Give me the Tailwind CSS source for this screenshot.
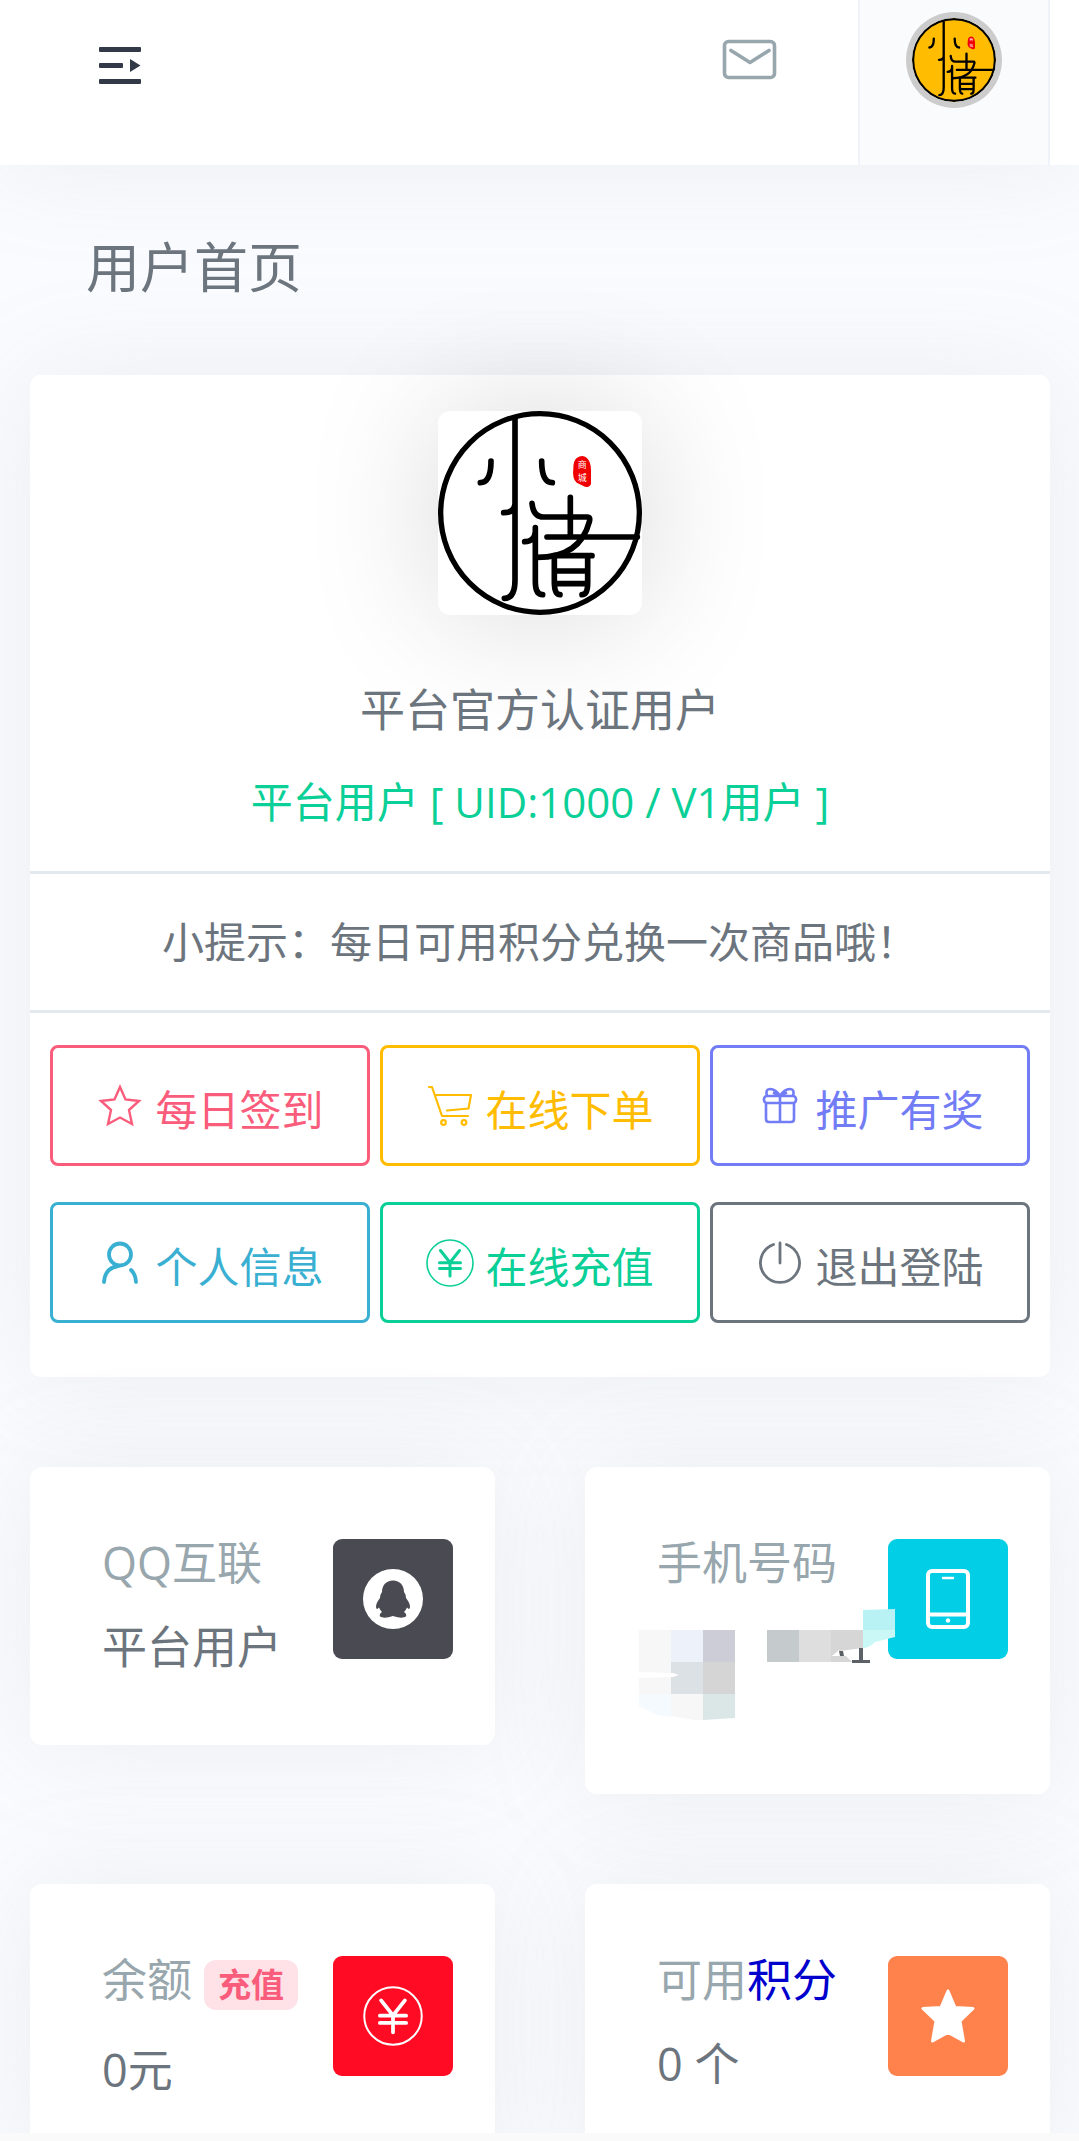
<!DOCTYPE html>
<html lang="zh-CN">
<head>
    <meta charset="UTF-8">
    <meta name="viewport" content="width=device-width, initial-scale=1.0">
    <title>用户首页</title>
    <script src="https://cdn.jsdelivr.net/npm/@tailwindcss/browser@4"></script>
</head>
<body class="bg-[#fafbfe] text-[#6c757d] font-['Open_Sans','Noto_Sans_CJK_SC',sans-serif] overflow-x-hidden">
    <!-- shared logo strokes -->
    <svg class="hidden">
        <symbol id="logo" viewBox="54 63 612 612">
            <circle cx="360" cy="369" r="298" fill="none" stroke="#000" stroke-width="16"/>
            <g fill="none" stroke="#000" stroke-width="17" stroke-linecap="round" stroke-linejoin="round">
                <path d="M285 85V570Q285 625 253 625M285 340Q285 368 251 368"/>
                <path d="M213 213Q213 278 181 278M365 213Q365 278 397 278"/>
                <path d="M336 340Q340 381 370 381H502Q512 381 508 395Q480 502 352 502M451 322V440M381 441H652"/>
                <path d="M346 413V575Q346 614 368 614M346 425Q344 455 314 455"/>
                <path d="M403 497H516M403 505V575Q403 614 420 614M503 497V580Q503 614 486 614M403 543H503M403 581H503"/>
            </g>
            <path d="M470 204Q487 193 500 203Q513 215 513 240V282Q508 294 495 290L470 278Q456 268 460 235Q460 212 470 204Z" fill="#f00000"/>
            <text x="473" y="234" font-size="27" fill="#fff" font-family="Noto Sans CJK SC">商</text>
            <text x="473" y="274" font-size="27" fill="#fff" font-family="Noto Sans CJK SC">城</text>
        </symbol>
        <symbol id="yen" viewBox="0 0 48 48">
            <circle cx="24" cy="24" r="23" fill="none" stroke="currentColor" stroke-width="1.6"/>
            <path d="M14.500 11.500L24 23.500L33.500 11.500M24 24V37M13.500 23.700H34.500M13.500 29.500H34.500" fill="none" stroke="currentColor" stroke-width="3" stroke-linecap="round"/>
        </symbol>
    </svg>

    <header class="relative flex items-start h-[165px] bg-white shadow-[0_0_105px_0_rgba(154,161,171,0.15)]">
        <button type="button" aria-label="菜单" class="ml-[96px] mt-[41px]">
            <svg class="w-12 h-12" viewBox="0 0 48 48" fill="#313a46">
                <rect x="3" y="6" width="42" height="5" rx="1"/>
                <rect x="3" y="22" width="24" height="5" rx="1"/>
                <rect x="3" y="38" width="42" height="5" rx="1"/>
                <path d="M34 18L44.500 24.500L34 31Z"/>
            </svg>
        </button>
        <a href="#" aria-label="消息" class="ml-auto mr-20 mt-8">
            <svg class="w-14 h-14" viewBox="0 0 56 56" fill="none" stroke="#98a6ad" stroke-width="3.600" stroke-linecap="round" stroke-linejoin="round">
                <rect x="2.500" y="9.500" width="50" height="36" rx="4"/>
                <path d="M9 18.500L28 30.500L47 18.500"/>
            </svg>
        </a>
        <a href="#" aria-label="账户" class="flex justify-center items-start w-48 h-full pt-3 mr-[29px] bg-[#fafbfd] border-x-2 border-[#f1f3fa]">
            <svg class="w-24 h-24 p-1.5 rounded-full bg-[#cccccc]" viewBox="0 0 84 84">
                <circle cx="42" cy="42" r="41.500" fill="#ffbc00"/>
                <use href="#logo" width="84" height="84"/>
            </svg>
        </a>
    </header>

    <main class="relative pl-[30px] pr-[29px]">
        <h4 class="pt-[62px] pb-[68px] pl-14 text-[54px] leading-[80px]">用户首页</h4>

        <section class="bg-white rounded-[10px] shadow-[0_0_105px_0_rgba(154,161,171,0.15)] pt-9 pb-[54px]">
            <svg class="block mx-auto w-[204px] h-[204px] rounded-xl bg-white shadow-[0_0_135px_0_rgba(0,0,0,0.15)]"><use href="#logo"/></svg>
            <h4 class="mt-[65px] text-center text-[45px] leading-[60px]">平台官方认证用户</h4>
            <p class="mt-8 mb-[39px] text-center text-[42px] leading-[60px] text-[#0acf97]">平台用户 [ UID:1000 / V1用户 ]</p>
            <p class="py-[38px] border-y-3 border-[#e3eaef] text-center text-[42px] leading-[60px]">小提示：每日可用积分兑换一次商品哦！</p>
            <div class="grid grid-cols-3 gap-x-2.5 gap-y-9 px-5 pt-8 text-[42px] leading-[60px]">
                <button type="button" class="flex items-center justify-center gap-[11px] h-[121px] border-3 rounded-lg border-[#fa5c7c] text-[#fa5c7c]">
                    <svg class="w-12 h-12" viewBox="0 0 48 48" fill="none" stroke="currentColor" stroke-width="2.400">
                        <path d="M24 5L29.500 17.500L43 19L33 28L36 42L24 35.500L12 42L15 28L5 19L18.500 17.500Z"/>
                    </svg>
                    <span class="pt-2">每日签到</span>
                </button>
                <button type="button" class="flex items-center justify-center gap-[11px] h-[121px] border-3 rounded-lg border-[#ffbc00] text-[#ffbc00]">
                    <svg class="w-12 h-12" viewBox="0 0 48 48" fill="none" stroke="currentColor" stroke-width="2.200" stroke-linecap="round" stroke-linejoin="round">
                        <path d="M3 5H6L16 34H42M9.500 13H45L42.500 26.500L21 28.500"/>
                        <circle cx="17.500" cy="40.500" r="2.300"/>
                        <circle cx="38" cy="40.500" r="2.300"/>
                    </svg>
                    <span class="pt-2">在线下单</span>
                </button>
                <button type="button" class="flex items-center justify-center gap-[11px] h-[121px] border-3 rounded-lg border-[#727cf5] text-[#727cf5]">
                    <svg class="w-12 h-12" viewBox="0 0 48 48" fill="none" stroke="currentColor" stroke-width="2.600" stroke-linejoin="round">
                        <rect x="8" y="14" width="32" height="7" rx="3"/>
                        <path d="M10 21V37Q10 40 13 40H35Q38 40 38 37V21M24 14V40M24 14Q20 7 14 7Q9 7 11 14M24 14Q28 7 34 7Q39 7 37 14M24 14L17 10.500M24 14L31 10.500"/>
                    </svg>
                    <span class="pt-2">推广有奖</span>
                </button>
                <button type="button" class="flex items-center justify-center gap-[11px] h-[121px] border-3 rounded-lg border-[#39afd1] text-[#39afd1]">
                    <svg class="w-12 h-12" viewBox="0 0 48 48" fill="none" stroke="currentColor" stroke-width="3.800" stroke-linecap="round">
                        <circle cx="24" cy="15.500" r="11"/>
                        <path d="M8 43Q9 29 22 27M35 31Q39.500 35 40 43"/>
                    </svg>
                    <span class="pt-2">个人信息</span>
                </button>
                <button type="button" class="flex items-center justify-center gap-[11px] h-[121px] border-3 rounded-lg border-[#0acf97] text-[#0acf97]">
                    <svg class="w-12 h-12"><use href="#yen"/></svg>
                    <span class="pt-2">在线充值</span>
                </button>
                <button type="button" class="flex items-center justify-center gap-[11px] h-[121px] border-3 rounded-lg border-[#6c757d] text-[#6c757d]">
                    <svg class="w-12 h-12" viewBox="0 0 48 48" fill="none" stroke="currentColor" stroke-width="2.800" stroke-linecap="round">
                        <path d="M17.500 5.500A19.500 19.500 0 1 0 30.500 5.500M24 4V24"/>
                    </svg>
                    <span class="pt-2">退出登陆</span>
                </button>
            </div>
        </section>

        <div class="grid grid-cols-2 items-start gap-[90px] mt-[90px] text-[45px] leading-[48px]">
            <section class="flex justify-between bg-white rounded-xl shadow-[0_0_105px_0_rgba(154,161,171,0.15)] pt-[72px] pb-[74px] pl-[72px] pr-[42px]">
                <div>
                    <h5 class="text-[#98a6ad]">QQ互联</h5>
                    <p class="mt-9">平台用户</p>
                </div>
                <div class="shrink-0 flex items-center justify-center w-[120px] h-[120px] rounded-[9px] bg-[#4a4a52]">
                    <svg class="w-[60px] h-[60px]" viewBox="0 0 60 60">
                        <circle cx="30" cy="30" r="30" fill="#fff"/>
                        <path d="M30 11.500C23 11.500 19 16.500 19 23Q17 25.500 17 29Q13 34 13 38Q13.500 41.500 16 38.500Q17 41 19 43Q16 45 17 47.500Q21 50 30 47Q39 50 43 47.500Q44 45 41 43Q43 41 44 38.500Q46.500 41.500 47 38Q47 34 43 29Q43 25.500 41 23C41 16.500 37 11.500 30 11.500Z" fill="#4a4a52"/>
                    </svg>
                </div>
            </section>

            <section class="relative flex justify-between bg-white rounded-xl shadow-[0_0_105px_0_rgba(154,161,171,0.15)] pt-[72px] pb-[135px] pl-[72px] pr-[42px]">
                <h5 class="text-[#98a6ad]">手机号码</h5>
                <div class="shrink-0 flex items-center justify-center w-[120px] h-[120px] rounded-[9px] bg-[#02cee6]">
                    <svg class="w-[60px] h-[60px]" viewBox="0 0 60 60" fill="none" stroke="#fff" stroke-width="4">
                        <rect x="10" y="2" width="40" height="56" rx="4"/>
                        <path d="M10 45.500H50"/>
                        <path d="M25 9H35" stroke-width="2.500" stroke-linecap="round"/>
                        <circle cx="30" cy="51.500" r="2.200" fill="#fff" stroke="none"/>
                    </svg>
                </div>
                <!-- masked number -->
                <svg class="absolute right-[155px] top-[142px] w-64 h-28" viewBox="0 0 256 112">
                    <path d="M0 21H32V85H0Z" fill="#f7f7f7"/>
                    <path d="M32 21H64V53H32Z" fill="#edf1fa"/>
                    <path d="M64 21H96V53H64Z" fill="#cccdd7"/>
                    <path d="M32 53H64V85H32Z" fill="#dce1e5"/>
                    <path d="M64 53H96V85H64Z" fill="#d5d5d5"/>
                    <path d="M0 85H32V108L18 106L0 97Z" fill="#f5faff"/>
                    <path d="M32 85H64V111H55L32 107Z" fill="#f7f7f7"/>
                    <path d="M64 85H96V109L64 111Z" fill="#dbe6e6"/>
                    <path d="M0 63L34 64L40 66L34 68L0 69Z" fill="#fff"/>
                    <path d="M128 21H160V53H128Z" fill="#c5cacd"/>
                    <path d="M160 21H192V53H160Z" fill="#dedede"/>
                    <path d="M192 21H224V39L201 42L193 47L207 47L213 53H192Z" fill="#d6d6d6"/>
                    <path d="M193 47L200 41L201 47Z" fill="#fff"/>
                    <path d="M224 1L256 0V21H224Z" fill="#b8f2f5"/>
                    <path d="M224 21H256V28L236 33Q230 39 224 39Z" fill="#c9f8f7"/>
                    <path d="M200 42H204L205 47H201ZM220 39H224V51H231V54H213V51H220Z" fill="#5c6167"/>
                    <path d="M201 47H206L213 53H201Z" fill="#d6d6d6"/>
                </svg>
            </section>

            <section class="flex justify-between bg-white rounded-xl shadow-[0_0_105px_0_rgba(154,161,171,0.15)] pt-[72px] pb-[74px] pl-[72px] pr-[42px]">
                <div>
                    <h5 class="flex items-start gap-3 text-[#98a6ad]">余额
                        <a href="#" class="mt-1 px-[14px] rounded-xl bg-[#fee2e8] text-[33px] leading-[50px] font-bold text-[#fa5c7c]">充值</a>
                    </h5>
                    <p class="mt-9">0元</p>
                </div>
                <div class="shrink-0 flex items-center justify-center w-[120px] h-[120px] rounded-[9px] bg-[#ff0b24] text-white">
                    <svg class="w-[60px] h-[60px]"><use href="#yen"/></svg>
                </div>
            </section>

            <section class="flex justify-between bg-white rounded-xl shadow-[0_0_105px_0_rgba(154,161,171,0.15)] pt-[72px] pb-[74px] pl-[72px] pr-[42px]">
                <div>
                    <h5 class="text-[#98a6ad]">可用<a href="#" class="text-[#0000cd]">积分</a></h5>
                    <p class="mt-9">0 个</p>
                </div>
                <div class="shrink-0 flex items-center justify-center w-[120px] h-[120px] rounded-[9px] bg-[#ff824d]">
                    <svg class="w-[60px] h-[60px]" viewBox="0 0 60 60" fill="#fff" stroke="#fff" stroke-width="3" stroke-linejoin="round">
                        <path d="M30 5L37 21.500L55 22.500L42 35L45.500 55L30 46.500L14.500 55L18 35L5 22.500L23 21.500Z"/>
                    </svg>
                </div>
            </section>
        </div>
    </main>
    <div class="fixed bottom-0 inset-x-0 h-2 bg-[#fafafa]"></div>
</body>
</html>
